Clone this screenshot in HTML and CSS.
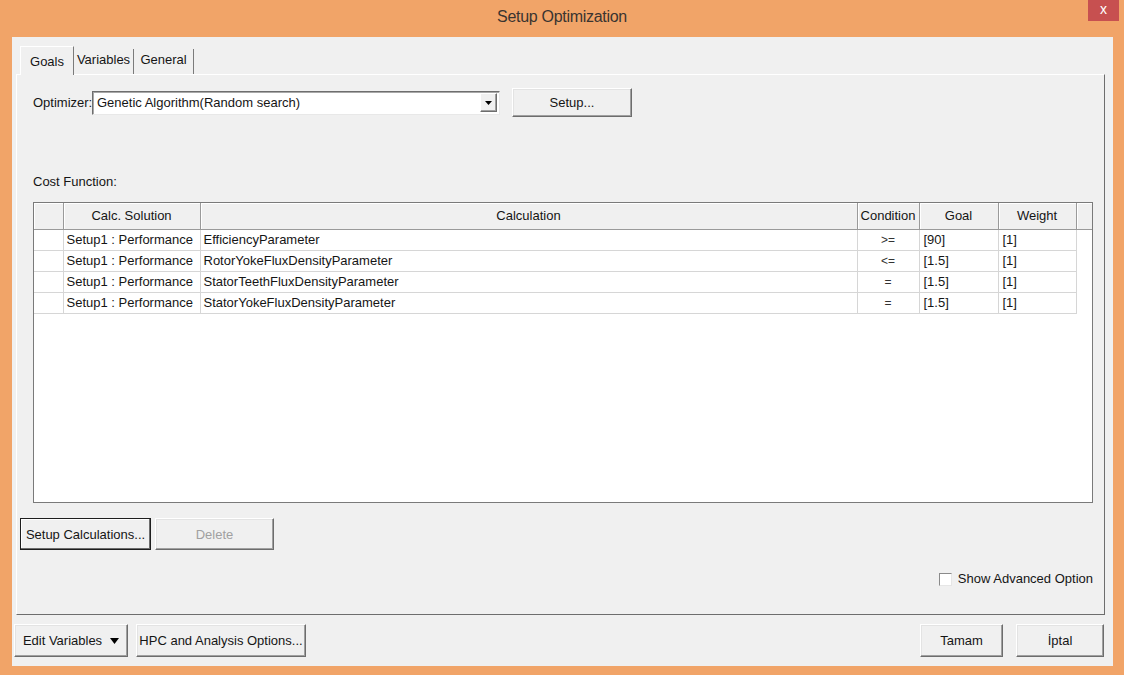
FILE: index.html
```html
<!DOCTYPE html>
<html lang="en">
<head>
<meta charset="utf-8">
<title>Setup Optimization</title>
<link rel="stylesheet" href="styles.css">
</head>
<body>
<div class="window">
  <header class="titlebar">
    <h1 class="title">Setup Optimization</h1>
    <button class="close" type="button">x</button>
  </header>

  <div class="client">
    <nav class="tabs">
      <div class="tab active">Goals</div>
      <div class="tab">Variables</div>
      <div class="tab">General</div>
    </nav>

    <section class="panel">
      <div class="optimizer-row">
        <span class="opt-label">Optimizer:</span>
        <div class="combo">
          <span class="combo-text">Genetic Algorithm(Random search)</span>
          <span class="combo-arrow">
            <svg width="7" height="4" viewBox="0 0 7 4"><path d="M0 0h7L3.5 4z" fill="#000"/></svg>
          </span>
        </div>
        <button class="btn btn-setup" type="button">Setup...</button>
      </div>

      <div class="cost-label">Cost Function:</div>

      <div class="grid-wrap">
        <table class="grid">
          <thead>
            <tr>
              <th class="c-rowhdr"></th>
              <th class="c-solution">Calc. Solution</th>
              <th class="c-calc">Calculation</th>
              <th class="c-cond">Condition</th>
              <th class="c-goal">Goal</th>
              <th class="c-weight">Weight</th>
              <th class="c-fill"></th>
            </tr>
          </thead>
          <tbody>
            <tr>
              <td></td><td>Setup1 : Performance</td><td>EfficiencyParameter</td>
              <td class="center">&gt;=</td><td class="val">[90]</td><td class="val">[1]</td><td class="fill"></td>
            </tr>
            <tr>
              <td></td><td>Setup1 : Performance</td><td>RotorYokeFluxDensityParameter</td>
              <td class="center">&lt;=</td><td class="val">[1.5]</td><td class="val">[1]</td><td class="fill"></td>
            </tr>
            <tr>
              <td></td><td>Setup1 : Performance</td><td>StatorTeethFluxDensityParameter</td>
              <td class="center">=</td><td class="val">[1.5]</td><td class="val">[1]</td><td class="fill"></td>
            </tr>
            <tr>
              <td></td><td>Setup1 : Performance</td><td>StatorYokeFluxDensityParameter</td>
              <td class="center">=</td><td class="val">[1.5]</td><td class="val">[1]</td><td class="fill"></td>
            </tr>
          </tbody>
        </table>
      </div>

      <div class="calc-buttons">
        <button class="btn btn-focus btn-calc" type="button">Setup Calculations...</button>
        <button class="btn btn-disabled btn-delete" type="button">Delete</button>
      </div>

      <label class="adv">
        <span class="checkbox"></span>
        <span>Show Advanced Option</span>
      </label>
    </section>

    <footer class="actions">
      <div class="actions-left">
        <button class="btn btn-edit" type="button">Edit Variables
          <svg width="9" height="6" viewBox="0 0 9 6"><path d="M0 0h9L4.5 6z" fill="#000"/></svg>
        </button>
        <button class="btn btn-hpc" type="button">HPC and Analysis Options...</button>
      </div>
      <div class="actions-right">
        <button class="btn btn-ok" type="button">Tamam</button>
        <button class="btn btn-cancel" type="button">İptal</button>
      </div>
    </footer>
  </div>
</div>
</body>
</html>
```

FILE: styles.css
```css
* { box-sizing: border-box; }

html, body {
  margin: 0;
  padding: 0;
}

body {
  width: 1124px;
  height: 675px;
  overflow: hidden;
  background: #f1a468;
  font-family: "Liberation Sans", Arial, sans-serif;
  font-size: 13px;
  color: #151515;
}

button {
  font-family: "Liberation Sans", Arial, sans-serif;
  font-size: 13px;
  color: #151515;
}

/* ---------- window frame ---------- */
.window {
  width: 1124px;
  height: 675px;
  display: flex;
  flex-direction: column;
  background: #f1a468;
}

.titlebar {
  flex: none;
  height: 37px;
  display: grid;
  grid-template-columns: 1fr auto 1fr;
}

.title {
  grid-column: 2;
  margin: 0;
  font-weight: normal;
  font-size: 16px;
  letter-spacing: -0.3px;
  line-height: 33px;
  color: #3a3430;
}

.close {
  grid-column: 3;
  justify-self: end;
  align-self: start;
  width: 31px;
  height: 21px;
  margin-right: 5px;
  padding: 0 0 2px;
  border: none;
  background: #c75050;
  color: #fff;
  font-size: 14px;
  line-height: 19px;
}

.client {
  flex: 1;
  margin: 0 11px 9px 12px;
  background: #f0f0f0;
  display: flex;
  flex-direction: column;
  padding: 8px 8px 0 2px;
}

/* ---------- tabs ---------- */
.tabs {
  display: flex;
  align-items: flex-end;
  height: 29px;
  margin-left: 6px;
}

.tab {
  height: 25px;
  line-height: 22px;
  text-align: center;
  border-right: 1px solid #7b7b7b;
  width: 60px;
}

.tab.active {
  width: 54px;
  height: 29px;
  line-height: 30px;
  border-left: 1px solid #fff;
  border-top: 1px solid #fff;
  margin-bottom: -1px;
  background: #f0f0f0;
  position: relative;
  z-index: 1;
}

/* ---------- tab page ---------- */
.panel {
  margin-left: 2px;
  height: 541px;
  border-top: 1px solid #fff;
  border-left: 1px solid #fff;
  border-right: 1px solid #6d6d6d;
  border-bottom: 1px solid #6d6d6d;
  display: flex;
  flex-direction: column;
  padding: 0 11px 0 3px;
}

.optimizer-row {
  display: flex;
  align-items: center;
  margin: 13px 0 0 13px;
  height: 29px;
}

.opt-label {
  width: 59px;
}

.combo {
  width: 408px;
  height: 24px;
  background: #fff;
  border: 1px solid;
  border-color: #6e6e6e #e8e8e8 #e8e8e8 #6e6e6e;
  box-shadow: inset 1px 1px 0 #a8a8a8;
  display: flex;
  align-items: center;
  justify-content: space-between;
  padding: 0 2px 0 4px;
}

.combo-arrow {
  width: 17px;
  height: 19px;
  display: flex;
  align-items: center;
  justify-content: center;
  background: #f0f0f0;
  border: 1px solid;
  border-color: #fff #6d6d6d #6d6d6d #fff;
  box-shadow: inset -1px -1px 0 #a0a0a0;
}

.btn {
  background: #f0f0f0;
  border: 1px solid;
  border-color: #ffffff #6d6d6d #6d6d6d #ffffff;
  box-shadow: inset -1px -1px 0 #a0a0a0, inset 1px 1px 0 #e3e3e3;
  padding: 0;
  display: inline-flex;
  align-items: center;
  justify-content: center;
  gap: 8px;
}

.btn-setup {
  margin-left: 12px;
  width: 120px;
  height: 29px;
}

.btn-focus {
  border-color: #1e1e1e;
  box-shadow: inset -1px -1px 0 #6d6d6d, inset 1px 1px 0 #fff;
}

.btn-disabled {
  color: #a0a0a0;
}

.cost-label {
  margin: 57px 0 0 13px;
  line-height: 16px;
}

/* ---------- cost function grid ---------- */
.grid-wrap {
  margin: 12px 0 0 13px;
  width: 1060px;
  height: 301px;
  background: #fff;
  border: 1px solid #7a7a7a;
  overflow: hidden;
}

.grid {
  border-collapse: collapse;
  table-layout: fixed;
  width: 1058px;
}

.grid th {
  height: 26px;
  padding: 0;
  font-weight: normal;
  background: #f0f0f0;
  border-right: 1px solid #9a9a9a;
  border-bottom: 1px solid #9a9a9a;
  box-shadow: inset 1px 1px 0 #fff;
  text-align: center;
}

.grid td {
  height: 21px;
  padding: 0 3px;
  white-space: nowrap;
  overflow: hidden;
  border-right: 1px solid #d6d6d6;
  border-bottom: 1px solid #d6d6d6;
}

.grid td.center {
  text-align: center;
  font-size: 12px;
  color: #333;
}

.grid td.val {
  padding-left: 4px;
}

.grid td.fill {
  border: none;
}

.c-rowhdr { width: 29px; }
.c-solution { width: 137px; }
.c-calc { width: 657px; }
.c-cond { width: 62px; }
.c-goal { width: 79px; }
.c-weight { width: 78px; }
.c-fill { width: 16px; }

/* ---------- buttons under the grid ---------- */
.calc-buttons {
  display: flex;
  gap: 4px;
  margin-top: 15px;
}

.btn-calc {
  width: 131px;
  height: 32px;
}

.btn-delete {
  width: 119px;
  height: 32px;
}

.adv {
  align-self: flex-end;
  margin-top: 21px;
  display: flex;
  align-items: center;
  gap: 6px;
  line-height: 16px;
}

.checkbox {
  width: 13px;
  height: 13px;
  background: #fff;
  border: 1px solid;
  border-color: #8a8a8a #e6e6e6 #e6e6e6 #8a8a8a;
}

/* ---------- dialog buttons ---------- */
.actions {
  display: flex;
  justify-content: space-between;
  padding: 9px 1px 0 0;
}

.actions-left,
.actions-right {
  display: flex;
}

.actions-left { gap: 8px; }
.actions-right { gap: 13px; }

.btn-edit {
  width: 114px;
  height: 33px;
  gap: 8px;
}

.btn-hpc {
  width: 170px;
  height: 33px;
}

.btn-ok {
  width: 83px;
  height: 33px;
}

.btn-cancel {
  width: 88px;
  height: 33px;
}
```
